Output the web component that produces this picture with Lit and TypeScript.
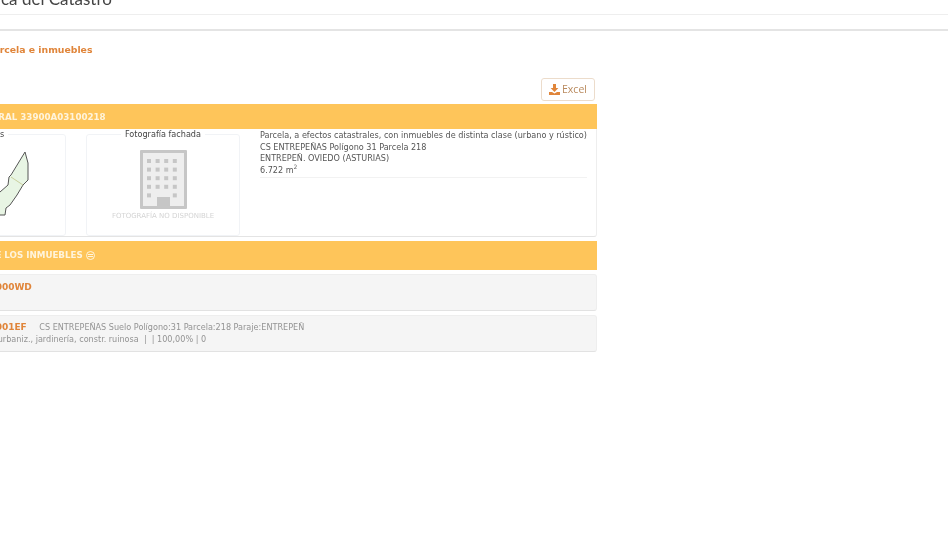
import { LitElement, html, css, svg } from "lit";
import { customElement } from "lit/decorators.js";

const dots = () => {
  const out = [];
  for (let r = 0; r < 4; r++) for (let c = 0; c < 4; c++)
    out.push(svg`<rect x=${7 + c * 8.6} y=${9 + r * 8.6} width="4" height="4"/>`);
  out.push(svg`<rect x="7" y="43.4" width="4" height="4"/><rect x="32.8" y="43.4" width="4" height="4"/>`);
  return out;
};

@customElement("app-root")
export class AppRoot extends LitElement {
  static styles = css`
    :host { display: block; width: 948px; height: 542px; overflow: hidden; background: #fff; font-family: "DejaVu Sans", sans-serif; font-stretch: condensed; }
    .page { margin-left: -110px; width: 1058px; filter: blur(0.45px); }
    .top { height: 14px; border-bottom: 1px solid #eee; overflow: hidden; }
    .title { font: 400 17px/20px "Lato", sans-serif; color: #444; margin: -11px 0 0 4px; white-space: nowrap; }
    .gap { height: 14px; border-bottom: 2px solid #e4e4e4; }
    .sub { font-size: 9.3px; line-height: 13px; font-weight: 700; font-stretch: normal; color: #e0853a; margin: 12px 0 0 47px; white-space: nowrap; }
    .content { width: 707px; }
    .tools { display: flex; justify-content: flex-end; padding: 22px 2px 3px 0; }
    .excel { box-sizing: border-box; height: 23px; width: 54px; padding-bottom: 1px; display: flex; align-items: center; justify-content: center; gap: 2px; border: 1px solid #ecdccb; border-radius: 3px; font: 10.5px "Open Sans", sans-serif; color: #b98a5e; }
    .head { background: #fec55a; color: #fff4dc; font-size: 8.7px; font-weight: 700; font-stretch: normal; display: flex; align-items: center; gap: 3px; white-space: nowrap; }
    .h1 { height: 25px; padding-left: 8px; }
    .h2 { box-sizing: border-box; height: 29px; margin-top: 4px; padding: 0 0 1px 46px; }
    .body { box-sizing: border-box; height: 108px; display: grid; grid-template-columns: 154px 154px 1fr; gap: 20px; padding: 0 10px 0 22px; border-bottom: 1px solid #e4e4e4; border-right: 1px solid #eee; border-radius: 0 0 3px 0; }
    fieldset { margin: 0; padding: 0; min-width: 0; height: 107px; box-sizing: border-box; border: 1px solid #f1f3f6; border-radius: 3px; }
    legend { margin: 0 auto; padding: 0 4px; font-size: 9px; line-height: 11px; color: #444; white-space: nowrap; }
    .map { display: block; width: 152px; height: 90px; }
    .bld { display: block; margin: 10px auto 0; width: 47px; height: 59px; }
    .nofoto { margin-top: 3px; text-align: center; font-size: 7px; line-height: 8px; font-stretch: normal; color: #d4d4d4; white-space: nowrap; }
    .info { font-size: 9px; line-height: 11.5px; color: #555; padding-top: 1px; }
    .info div { white-space: nowrap; }
    .info div:last-child { border-bottom: 1px solid #f2f2f2; padding-bottom: 1px; }
    sup { font-size: 6px; line-height: 0; }
    .row { box-sizing: border-box; margin-top: 4px; background: #f5f5f5; border: 1px solid #eee; border-bottom-color: #e2e2e2; border-left: 0; border-radius: 0 3px 3px 0; padding: 6px 0 0 0; font-size: 9px; line-height: 12px; color: #939393; height: 37px; }
    .r2 { padding-top: 5px; }
    .ref { color: #e0853a; font-weight: 700; font-stretch: normal; margin-right: 10px; }
    .l { white-space: nowrap; padding-left: 11px; }
    .lr { padding-left: 8px; }
  `;

  render() {
    return html`<div class="page">
      <div class="top"><div class="title">Sede Electrónica del Catastro</div></div>
      <div class="gap"></div>
      <div class="sub">Datos de parcela e inmuebles</div>
      <div class="content">
        <div class="tools"><div class="excel">
          <svg width="11" height="11" viewBox="0 0 11 11"><path fill="#e0853a" d="M4 0h3v4h2.4L5.5 8 1.6 4H4zM0 8h3l2.5 1.6L8 8h3v3H0z"/></svg>Excel</div></div>
        <div class="head h1">REFERENCIA CATASTRAL 33900A03100218</div>
        <div class="body">
          <fieldset><legend>Croquis</legend>
            <svg class="map" viewBox="-87 140 152 90">
              <path fill="#e8f5e4" stroke="#555" stroke-width="1" d="M25 152L28 163V180L23 185 17 195 10 205 6 208 5 215H-10L-20 200 0 192 8 185 9 177 11 175Z"/>
              <path fill="none" stroke="#c9cf9c" d="M11 177L23 185"/>
            </svg>
          </fieldset>
          <fieldset><legend>Fotografía fachada</legend>
            <svg class="bld" viewBox="0 0 47 59"><rect width="47" height="59" rx="1" fill="#c6c6c6"/><rect x="3" y="3" width="41" height="53" fill="#eee"/><g fill="#c6c6c6">${dots()}<rect x="17" y="47" width="13" height="12"/></g></svg>
            <div class="nofoto">FOTOGRAFÍA NO DISPONIBLE</div>
          </fieldset>
          <div class="info">
            <div>Parcela, a efectos catastrales, con inmuebles de distinta clase (urbano y rústico)</div>
            <div>CS ENTREPEÑAS Polígono 31 Parcela 218</div>
            <div>ENTREPEÑ. OVIEDO (ASTURIAS)</div>
            <div>6.722 m<sup>2</sup></div>
          </div>
        </div>
        <div class="head h2">RELACIÓN DE LOS INMUEBLES
          <svg width="9" height="9" viewBox="0 0 9 9" fill="none" stroke="#fff4dc"><circle cx="4.5" cy="4.5" r="4"/><path d="M2 3.5h5M2 5.5h5"/></svg></div>
        <div class="row"><div class="l"><span class="ref">33900A031002180000WD</span></div></div>
        <div class="row r2">
          <div class="l"><span class="ref">33900A031002180001EF</span> CS ENTREPEÑAS Suelo Polígono:31 Parcela:218 Paraje:ENTREPEÑ</div>
          <div class="l lr">Suelo sin edificar, obras urbaniz., jardinería, constr. ruinosa &nbsp;| &nbsp;| 100,00% | 0</div>
        </div>
      </div>
    </div>`;
  }
}
